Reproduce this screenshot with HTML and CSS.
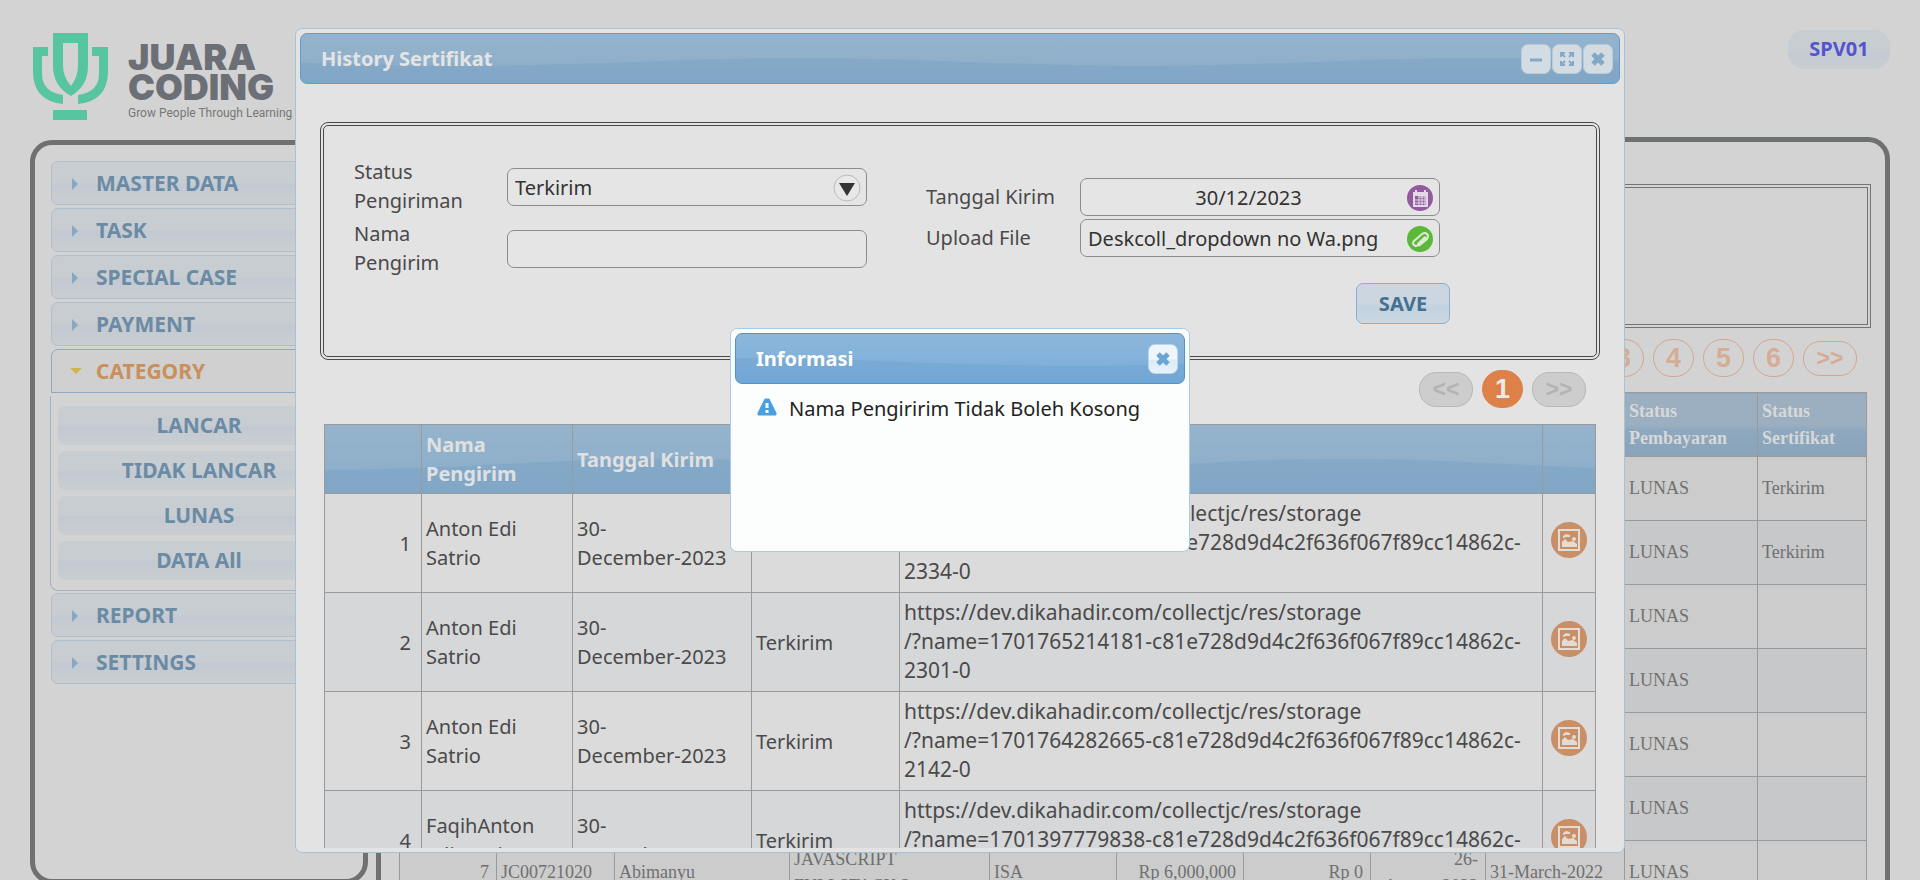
FILE: index.html
```html
<!DOCTYPE html>
<html lang="id">
<head>
<meta charset="utf-8">
<title>History Sertifikat</title>
<link rel="stylesheet" href="styles.css">
</head>
<body>
<svg class="defs" width="0" height="0" aria-hidden="true">
  <symbol id="picture" viewBox="0 0 36 36">
    <circle cx="18" cy="18" r="18" fill="#c98f66"/>
    <path d="M8 8h20v20H8z" fill="none" stroke="#e3dcd5" stroke-width="2"/>
    <path d="M11 25v-5l3-3 3 3 5-1 4 3v3z" fill="#e3dcd5"/>
    <path d="M12 14l3-2 4 1v2l-4 0-3 1z" fill="#e3dcd5"/>
    <circle cx="23" cy="17" r="2" fill="#e3dcd5"/>
  </symbol>
  <symbol id="cross" viewBox="0 0 16 16">
    <path d="M3 3l10 10M13 3L3 13" stroke="currentColor" stroke-width="5" fill="none"/>
  </symbol>
</svg>

<header class="top">
  <div class="brand">
    <svg class="mark" viewBox="0 0 75 87" aria-hidden="true" fill="#57c5a0">
      <path fill-rule="evenodd" d="M20 0h35v33q0 20-17 30Q20 53 20 33zM30 10v22q0 12 8 21 7-9 7-21V10z"/>
      <path d="M0 14h15v9h-6v18q0 18 21 21v9Q0 68 0 38zM75 14H59v9h7v18q0 18-21 21v9q30-3 30-33z"/>
      <path d="M20 77h34v10H20z"/>
    </svg>
    <div class="words">
      <span class="name">JUARA</span>
      <span class="name">CODING</span>
      <span class="tag">Grow People Through Learning</span>
    </div>
  </div>
  <a class="user" href="#">SPV01</a>
</header>

<div class="layout">
  <nav class="side">
    <button class="head">MASTER DATA</button>
    <button class="head">TASK</button>
    <button class="head">SPECIAL CASE</button>
    <button class="head">PAYMENT</button>
    <button class="head open">CATEGORY</button>
    <div class="sub">
      <a href="#">LANCAR</a>
      <a href="#">TIDAK LANCAR</a>
      <a href="#">LUNAS</a>
      <a href="#">DATA All</a>
    </div>
    <button class="head">REPORT</button>
    <button class="head">SETTINGS</button>
  </nav>
  <main class="main">
    <div class="filter"></div>
    <div class="pages back">
      <button class="num">3</button>
      <button class="num">4</button>
      <button class="num">5</button>
      <button class="num">6</button>
      <button class="step">&gt;&gt;</button>
    </div>
    <table class="data">
      <colgroup><col class="d1"><col class="d2"><col class="d3"><col class="d4"><col class="d5"><col class="d5"><col class="d5"><col class="d6"><col class="d7"><col class="d8"><col class="d9"></colgroup>
      <thead><tr><th colspan="9"></th><th>Status Pembayaran</th><th>Status Sertifikat</th></tr></thead>
      <tbody>
        <tr><td colspan="9"></td><td>LUNAS</td><td>Terkirim</td></tr>
        <tr><td colspan="9"></td><td>LUNAS</td><td>Terkirim</td></tr>
        <tr><td colspan="9"></td><td>LUNAS</td><td></td></tr>
        <tr><td colspan="9"></td><td>LUNAS</td><td></td></tr>
        <tr><td colspan="9"></td><td>LUNAS</td><td></td></tr>
        <tr><td colspan="9"></td><td>LUNAS</td><td></td></tr>
        <tr><td class="r">7</td><td>JC00721020</td><td>Abimanyu</td><td>JAVASCRIPT FULLSTACK 2</td><td>ISA</td><td class="r">Rp 6,000,000</td><td class="r">Rp 0</td><td class="r">26-<br>August-2022</td><td>31-March-2022</td><td>LUNAS</td><td></td></tr>
      </tbody>
    </table>
  </main>
</div>

<section class="window history" role="dialog" aria-labelledby="t1">
  <div class="bar">
    <h2 id="t1">History Sertifikat</h2>
    <div class="tools">
      <button aria-label="Minimize"><svg viewBox="0 0 16 16"><path d="M2 9h12" stroke="currentColor" stroke-width="3"/></svg></button>
      <button aria-label="Maximize"><svg viewBox="0 0 16 16"><path d="M2 6V2h4M10 2h4v4M14 10v4h-4M6 14H2v-4M2 2l4 4M14 2l-4 4M14 14l-4-4M2 14l4-4" fill="none" stroke="currentColor" stroke-width="2"/></svg></button>
      <button aria-label="Close"><svg viewBox="0 0 16 16"><use href="#cross"/></svg></button>
    </div>
  </div>
  <div class="body">
    <form class="form">
      <div class="col left">
        <label for="status">Status Pengiriman</label>
        <div class="field"><select id="status"><option>Terkirim</option></select>
          <svg class="ico" viewBox="0 0 27 27" aria-hidden="true"><circle cx="13" cy="13" r="13" fill="#e8e8e8" stroke="#bbb"/><path d="M5 8h16l-8 13z" fill="#333"/></svg></div>
        <label for="nama">Nama Pengirim</label>
        <div class="field"><input id="nama" type="text"></div>
      </div>
      <div class="col right">
        <label for="tgl">Tanggal Kirim</label>
        <div class="field"><input id="tgl" class="mid" type="text" value="30/12/2023">
          <svg class="ico" viewBox="0 0 27 27" aria-hidden="true"><circle cx="13" cy="13" r="13" fill="#935aa0"/><path d="M6 7h15v15H6z" fill="#e3d8e5"/><path d="M9 5v3M18 5v3" stroke="#e3d8e5" stroke-width="2"/><path d="M8 11h11v9H8z" fill="#935aa0"/><path d="M12 12h7M8 15h11M8 18h11M12 11v9M15 11v9M18 11v9" stroke="#e3d8e5"/></svg></div>
        <label for="file">Upload File</label>
        <div class="field"><input id="file" type="text" value="Deskcoll_dropdown no Wa.png">
          <svg class="ico" viewBox="0 0 27 27" aria-hidden="true"><circle cx="13" cy="13" r="13" fill="#5cb838"/><path d="M19 11l-8 8q-2 2-4 0t0-4l8-7q3-2 5 0t0 5l-7 6q-2 1-2-1l7-7" fill="none" stroke="#dcebd6" stroke-width="2"/></svg></div>
        <button class="save" type="button">SAVE</button>
      </div>
    </form>
    <div class="pages">
      <button class="step off">&lt;&lt;</button>
      <button class="num on">1</button>
      <button class="step off">&gt;&gt;</button>
    </div>
    <table class="list">
      <colgroup><col class="c1"><col class="c2"><col class="c3"><col class="c4"><col><col class="c6"></colgroup>
      <thead><tr><th></th><th>Nama Pengirim</th><th>Tanggal Kirim</th><th></th><th></th><th></th></tr></thead>
      <tbody>
        <tr><td class="r">1</td><td>Anton Edi Satrio</td><td>30-<br>December-2023</td><td></td><td class="url">https://dev.dikahadir.com/collectjc/res/storage<br>/?name=1701765214181-c81e728d9d4c2f636f067f89cc14862c-<br>2334-0</td><td class="pic"><svg><use href="#picture"/></svg></td></tr>
        <tr><td class="r">2</td><td>Anton Edi Satrio</td><td>30-<br>December-2023</td><td>Terkirim</td><td class="url">https://dev.dikahadir.com/collectjc/res/storage<br>/?name=1701765214181-c81e728d9d4c2f636f067f89cc14862c-<br>2301-0</td><td class="pic"><svg><use href="#picture"/></svg></td></tr>
        <tr><td class="r">3</td><td>Anton Edi Satrio</td><td>30-<br>December-2023</td><td>Terkirim</td><td class="url">https://dev.dikahadir.com/collectjc/res/storage<br>/?name=1701764282665-c81e728d9d4c2f636f067f89cc14862c-<br>2142-0</td><td class="pic"><svg><use href="#picture"/></svg></td></tr>
        <tr><td class="r">4</td><td>FaqihAnton Edi Satrio</td><td>30-<br>December-2023</td><td>Terkirim</td><td class="url">https://dev.dikahadir.com/collectjc/res/storage<br>/?name=1701397779838-c81e728d9d4c2f636f067f89cc14862c-</td><td class="pic"><svg><use href="#picture"/></svg></td></tr>
      </tbody>
    </table>
  </div>
</section>

<section class="window info" role="alertdialog" aria-labelledby="t2">
  <div class="bar">
    <h2 id="t2">Informasi</h2>
    <div class="tools"><button aria-label="Close"><svg viewBox="0 0 16 16"><use href="#cross"/></svg></button></div>
  </div>
  <p class="msg">
    <svg viewBox="0 0 20 18" aria-hidden="true"><path d="M8 1h4l7 14v2H1v-2z" fill="#4a9fe0" stroke="#4a9fe0" stroke-linejoin="round"/><path d="M10 5v5M10 12v3" stroke="#fff" stroke-width="3"/></svg>
    Nama Pengiririm Tidak Boleh Kosong
  </p>
</section>
</body>
</html>
```

FILE: styles.css
```css
:root {
  --wave: url("data:image/svg+xml,%3Csvg xmlns='http://www.w3.org/2000/svg' viewBox='0 0 680 100' preserveAspectRatio='none'%3E%3Cpath d='M0 65C120 65 220 49 340 49S560 65 680 65V100H0z' fill='rgb(70,130,180)' fill-opacity='.14'/%3E%3C/svg%3E");
}
* { box-sizing: border-box; }
body {
  margin: 0; height: 100vh; overflow: hidden; background: #d3d3d3; color: #4a4a4a;
  font: 20px/29px "Noto Sans", sans-serif;
}
button, input, select { font: inherit; color: inherit; margin: 0; }
.defs { position: absolute; }

.top { display: flex; justify-content: space-between; align-items: flex-start; height: 137px; padding: 30px 30px 0 33px; }
.brand { display: flex; gap: 20px; padding-top: 3px; }
.mark { width: 75px; height: 87px; }
.words { display: flex; flex-direction: column; padding-top: 9px; }
.name { font: 900 36px/30px Inter, sans-serif; color: #6c7076; }
.tag { font: 12px/23px Roboto, sans-serif; color: #777; }
.user {
  width: 102px; height: 39px; border-radius: 16px; text-align: center; line-height: 38px; font-weight: 700;
  color: #5454cf; text-decoration: none; background: linear-gradient(#c8cdd1 50%, #c4cad3 60%, #c9ced1);
}

.layout { display: flex; gap: 8px; padding: 0 30px; align-items: flex-start; }
.side { width: 338px; height: 744px; margin-top: 3px; padding: 16px; border: 5px solid #6f7070; border-radius: 22px; }
.head {
  position: relative; display: block; width: 100%; height: 44px; margin-bottom: 3px; padding: 0 0 0 44px; text-align: left;
  border: 1px solid #afbfcb; border-radius: 7px; color: #6b8ba5; font-size: 21px; font-weight: 700; line-height: 40px;
  background: linear-gradient(#c8cdd1 48%, #c3c9d2 54%, #c9ced1);
}
.head::before { content: ""; position: absolute; left: 20px; top: 16px; border: 6px solid transparent; border-left-color: #86a8c4; border-right: 0; }
.head.open { border-color: #8caac3; border-radius: 7px 7px 0 0; color: #c98f5c; background: #cfd0cf; }
.head.open::before { left: 18px; top: 18px; border: 6px solid transparent; border-top-color: #d2b44f; border-bottom: 0; }
.sub { display: grid; gap: 6px; margin: 0 -1px 2px; padding: 10px 7px; border: 1px solid #9fb5c7; border-top: 0; border-radius: 0 0 8px 8px; }
.sub a {
  height: 39px; border-radius: 7px; text-align: center; line-height: 39px; font-size: 21px; font-weight: 700; color: #6b8ba5; text-decoration: none;
  background: linear-gradient(#c8cdd1 48%, #c3c9d2 54%, #c9ced1);
}

.main { flex: 1; min-width: 0; height: 800px; padding: 42px 14px; border: 5px solid #6f7070; border-radius: 22px; }
.filter { height: 144px; border: 4px double #747474; }
.pages { display: flex; justify-content: flex-end; align-items: center; gap: 9px; padding: 10px 14px 0 0; }
.pages.back { padding-top: 11px; }
.pages button { padding: 0; border: 1px solid #d6a68c; background: none; color: #d5ad95; font: bold 27px/34px "Liberation Sans", sans-serif; }
.pages .num { width: 41px; height: 38px; border-radius: 19px; }
.pages .step { width: 54px; height: 35px; border-radius: 17px; line-height: 30px; font-size: 23px; }
.pages .on { border-color: #de8148; background: #de8148; color: #eaeaea; }
.pages .off { border-color: #b8b8b8; background: #cdcdcd; color: #b4b4b4; }

.data { width: calc(100% - 9px); margin: 15px 0 0 4px; table-layout: fixed; border-collapse: collapse; font: 18px/27px "Liberation Serif", serif; color: #707070; }
.data th { height: 64px; text-align: left; color: #d8d8d8; background: linear-gradient(#9bafc0 50%, #8da8bf 58%, #8aa3bb); }
.data th, .data td { padding: 0 4px; border: 1px solid #9a9a9a; }
.data td { height: 64px; background: #cccccc; }
.data tr:nth-child(even) td { background: #c7c8ca; }
.data .r { text-align: right; padding-right: 7px; }
.d1 { width: 97px; } .d2 { width: 118px; } .d3 { width: 175px; } .d4 { width: 200px; } .d5 { width: 127px; }
.d6 { width: 115px; } .d7 { width: 139px; } .d8 { width: 133px; } .d9 { width: 109px; }

.window { position: fixed; padding: 4px; border: 1px solid #a9c1d5; border-radius: 7px; background: #e3e3e3; }
.history { inset: 28px 295px 27px; display: flex; flex-direction: column; }
.info { inset: 0; margin: auto; width: 460px; height: 224px; border-color: #a6cbe8; background: #fcfefd; color: #222; }
.bar {
  display: flex; justify-content: space-between; align-items: center; flex: none; height: 51px; padding: 0 6px 0 20px;
  border: 1px solid #649bc9; border-radius: 7px; background: var(--wave) 160px 0 / 680px 100%, linear-gradient(#95b3cc, #8aadca);
}
.info .bar { border-color: #4795d4; background: var(--wave) 340px 0 / 680px 100%, linear-gradient(#8db7db, #78addb); }
.bar h2 { margin: 0; font-size: 20px; font-weight: 700; color: #e4e4e4; }
.info h2 { color: #fff; }
.tools { display: flex; gap: 1px; }
.tools button { width: 30px; height: 30px; padding: 6px; border: 1px solid #b9cbd9; border-radius: 7px; color: #83a9c7; background: #d4dce3; }
.info .tools button { color: #6ba5d3; border-color: #bcd7ec; background: linear-gradient(#eef5fb 50%, #dcebf8 55%, #e8f2fa); }
.tools svg { display: block; width: 16px; height: 16px; }
.body { flex: 1; min-height: 0; overflow: hidden; padding: 38px 20px 0; }

.form { display: flex; gap: 59px; height: 238px; padding: 31px 30px 0; border: 4px double #4a4a4a; border-radius: 8px; }
.col { display: grid; align-content: start; align-items: start; }
.left { grid-template-columns: 153px 360px; row-gap: 4px; }
.left label { width: 110px; height: 58px; }
.left .field { margin-top: 11px; }
.right { grid-template-columns: 154px 360px; row-gap: 3px; margin-top: 21px; }
.right label { line-height: 38px; }
.field { position: relative; height: 38px; }
.field input, .field select {
  display: block; width: 100%; height: 38px; padding: 0 7px; border: 1px solid #8c8c8c; border-radius: 7px;
  background: #e5e5e5; color: #333; appearance: none;
}
.field .mid { text-align: center; padding-right: 30px; }
.ico { position: absolute; right: 6px; top: 7px; width: 27px; height: 27px; overflow: visible; }
.save {
  grid-column: 2; justify-self: end; width: 94px; height: 41px; margin: 23px -10px 0 0; border: 1px solid #84b0d4; border-radius: 7px;
  color: #45708f; font-weight: 700; background: linear-gradient(#cbd6e0 50%, #c2d2e0 58%, #cdd8e1);
}

.list { width: calc(100% - 8px); margin: 16px 4px 0; table-layout: fixed; border-collapse: collapse; }
.list thead tr { background: var(--wave) 0 0 / 680px 100%, linear-gradient(#95b3cc, #8aadca); }
.list th { height: 69px; text-align: left; font-weight: 700; color: #e0e0e0; }
.list th, .list td { padding: 0 4px; border: 1px solid #9a9a9a; white-space: nowrap; }
.list th:nth-child(2), .list td:nth-child(2) { white-space: normal; padding-right: 20px; }
.list td { height: 99px; background: #dbdbdb; }
.list tr:nth-child(even) td { background: #d6d7d9; }
.list .r { text-align: right; padding-right: 10px; }
.list .url { padding-top: 5px; font-size: 21px; vertical-align: top; }
.c1 { width: 97px; } .c2 { width: 151px; } .c3 { width: 179px; } .c4 { width: 148px; } .c6 { width: 53px; }
.pic svg { display: block; width: 36px; height: 36px; margin: 0 0 6px 4px; }

.msg { display: flex; align-items: flex-start; gap: 12px; margin: 10px 22px; white-space: nowrap; }
.msg svg { flex: none; width: 20px; height: 18px; margin-top: 4px; }
```
